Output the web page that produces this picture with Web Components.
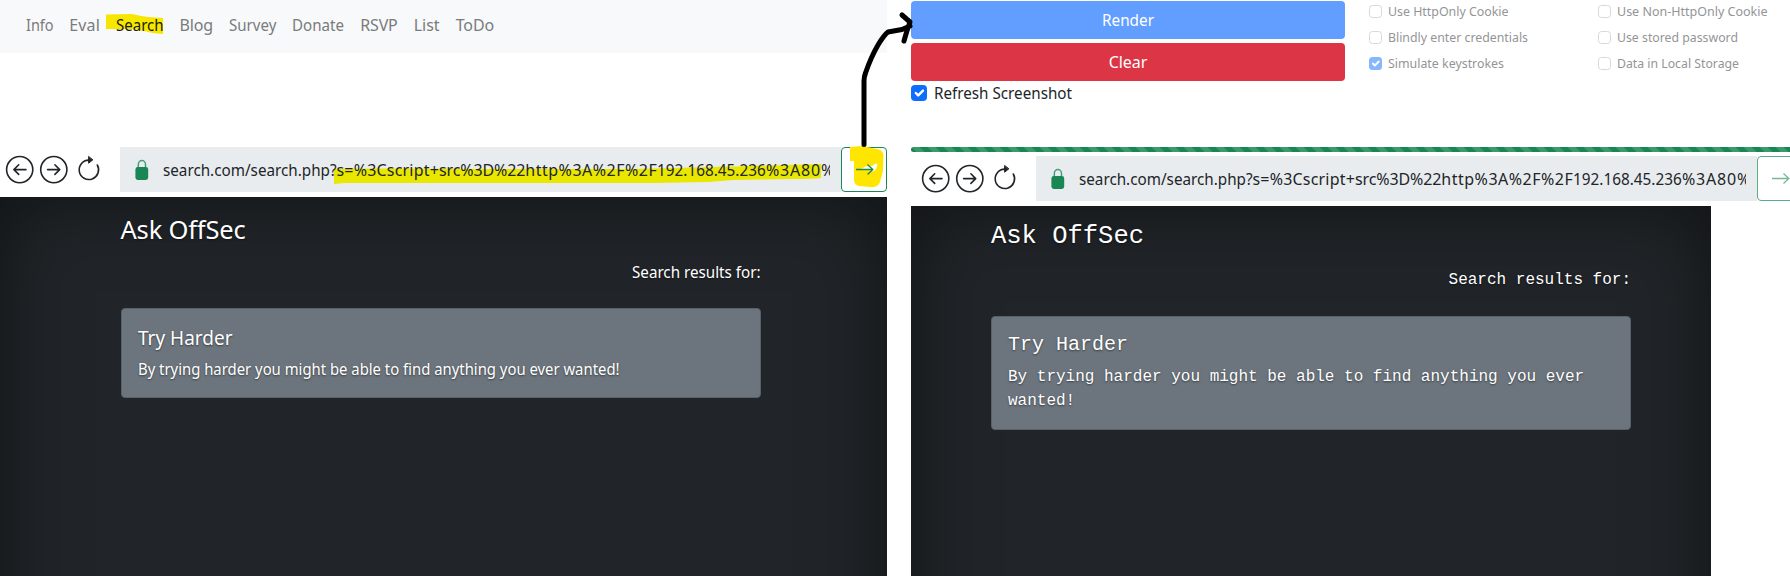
<!DOCTYPE html>
<html lang="en">
<head>
<meta charset="utf-8">
<title>Search</title>
<style>
body{margin:0;background:#fff;width:1790px;height:576px;overflow:hidden;font-family:"Noto Sans",sans-serif;font-size:16px;line-height:24px;color:#212529}
</style>
</head>
<body>
<app-page></app-page>
<script>
class Base extends HTMLElement{
  constructor(){super();this.attachShadow({mode:"open"})}
  connectedCallback(){this.shadowRoot.innerHTML=this.render()}
}
/* Text set to an exact advance width: condensed when too wide, tracked out when too narrow. */
class FitText extends Base{
  render(){return `<style>:host{display:inline-block;white-space:pre;width:${this.getAttribute("w")}px}span{display:inline-block;transform-origin:0 50%}</style><span><slot></slot></span>`}
  connectedCallback(){
    super.connectedCallback();
    const s=this.shadowRoot.querySelector("span"),w=+this.getAttribute("w");
    const n=[...this.textContent].length,cur=s.getBoundingClientRect().width;
    s.style.marginRight="-60px";
    if(w/cur<.975)s.style.transform=`scaleX(${(w/cur).toFixed(4)})`;
    else s.style.letterSpacing=((w-cur)/n).toFixed(4)+"px";
  }
}
class NavBar extends Base{
  render(){
    const items=[["Info",27.6],["Eval",30.6],["Search",47.6],["Blog",33.4],["Survey",47.4],["Donate",52],["RSVP",37.4],["List",26],["ToDo",38.6]];
    return `<style>:host{display:block;background:#f8f9fa}nav{display:flex;gap:16px;height:53px;box-sizing:border-box;padding:13px 0 0 25.700px;color:#7a7b7c}
    .on{color:#1b1c06;position:relative}.on svg{position:absolute;left:-9.500px;top:0}.on fit-text{position:relative}</style>
    <nav>${items.map(([t,w])=>`<span class="${t=="Search"?"on":""}">${t=="Search"?'<svg width="58" height="24"><path d="M0 1.5L26 1Q34 3 42 4L57 5V21Q48 21 38 18L26 16H0Z" fill="#f6e600"/></svg>':""}<fit-text w="${w}">${t}</fit-text></span>`).join("")}</nav>`}
}
class AddressBar extends Base{
  render(){
    const m=this.hasAttribute("marked");
    const parts=[["search.com/search.php?",173.5],["s=%3Cscript+",102.5],["src%3D%22",86.3],["http%3A%2F%2F",132],["192.168.45.236",108.7],["%3A80",55],["%",13.3]];
    return `<style>:host{display:flex;height:45px;align-items:stretch}
    .icons{flex:none;width:120px}
    .icons svg{display:block}
    .wrap{flex:none;background:#e9ecef;display:flex;width:721px;box-sizing:border-box;padding-left:15px}
    .wrap>svg{flex:none}
    .txt{position:relative;padding-top:11px;width:667px}
    .txt div{position:relative;overflow:hidden;width:667px;display:flex}
    .txt fit-text{flex:none}
    .txt svg{position:absolute;left:170px;top:14px}
    .btn{flex:none;box-sizing:border-box;width:46px;height:45px;border:1px solid ${m?"#198754":"#5eab87"};border-radius:4px;background:#fff;position:relative}
    .btn svg{position:absolute;left:0;top:-2px}</style>
    <div class="icons"><svg width="120" height="45" fill="none" stroke="#212529" stroke-width="1.6" stroke-linecap="round" stroke-linejoin="round">
      <circle cx="19.7" cy="22.6" r="13.1"/><path d="M26 22.6H14M18.7 17.8L13.9 22.6L18.7 27.4"/>
      <circle cx="53.8" cy="22.6" r="13.1"/><path d="M47.6 22.6H59.7M54.9 17.8L59.7 22.6L54.9 27.4"/>
      <path d="M97.3 18A9.7 9.7 0 1 1 88.7 13.1"/><path d="M88.6 9.8V16.2L92.6 13Z" fill="#212529" stroke-width="1"/>
    </svg></div>
    <div class="wrap"><svg width="28" height="45"><path d="M3.3 22V17.8a3.6 4.2 0 0 1 7.2 0V22" fill="none" stroke="#46a077" stroke-width="1.5"/><rect x="0.4" y="20" width="12.8" height="13" rx="2.4" fill="#198754"/></svg>
    <div class="txt">${m?'<svg width="488" height="24"><path d="M1 8L40 7.5L160 8L300 8L400 5.5L488 3V17Q478 18 460 18L400 19L376 21L320 22H160L45 22L12 22L1 23Z" fill="#e9e700"/></svg>':""}<div>${parts.map(([t,w])=>`<fit-text w="${w}">${t}</fit-text>`).join("")}</div></div></div>
    <div class="btn"><svg width="44" height="46">${m?'<path d="M8 1L20 0L35 3Q41 4 41.500 9L41 25L38 36Q36 42 28 41L17 40Q12 39 12 34V15H8Z" fill="#ffe600"/><path d="M19 23Q25 19 30 20L33 18Q37 16 34 23Q32 27 27 24Z" fill="#fff"/>':""}<path d="M14 23.500H30.500M25.500 18.500L30.800 23.500L25.500 28.500" fill="none" stroke="${m?"#198754":"#75b798"}" stroke-width="1.3"/></svg></div>`}
}
class ResultCard extends Base{
  render(){return `<style>:host{display:block;box-sizing:border-box;width:640px;background:#6c757d;border:1px solid #596168;border-radius:4px;padding:var(--pt,17px) 16px 16px}
  .t{font-size:20px;line-height:24px;margin-bottom:var(--gap,7px)}.b{line-height:24px}</style><div class="t"><slot name="title"></slot></div><div class="b"><slot></slot></div>`}
}
class AskScreen extends Base{
  render(){return `<style>:host{display:block;background:#212529;color:#fff;text-shadow:0 1px 2px rgba(0,0,0,.5);box-shadow:inset 0 0 80px rgba(0,0,0,.5);overflow:hidden;box-sizing:border-box;flex:none}
  .h{font-size:25.500px;line-height:29px;height:29px}.s{display:flex;justify-content:flex-end;width:640px}</style>
  <div class="h"><slot name="heading"></slot></div><div class="s"><slot name="sub"></slot></div><slot></slot>`}
}
class CheckItem extends Base{
  render(){
    const on=this.hasAttribute("on"),d=this.hasAttribute("dim"),s=d?13:16;
    return `<style>:host{display:flex;align-items:center}
    i{box-sizing:border-box;flex:none;width:${s}px;height:${s}px;border-radius:${d?3.5:4}px;${on?"":"border:1px solid #d8d8d8;"}background:${on?(d?"#86b6fe":"#0d6efd"):"#fff"};display:flex;align-items:center;justify-content:center;margin-right:${d?6:7}px}
    i svg{width:${s}px;height:${s}px;flex:none}</style>
    <i>${on?'<svg viewBox="0 0 20 20"><path d="M6 10l3 3l6-6" fill="none" stroke="#fff" stroke-width="3" stroke-linecap="round" stroke-linejoin="round"/></svg>':""}</i><slot></slot>`}
}
class ActionButton extends Base{
  render(){return `<style>:host{display:flex;justify-content:center;align-items:center;height:38px;border-radius:4px;color:#fff;background:var(--bg);box-sizing:border-box}</style><slot></slot>`}
}
class AppPage extends Base{
  render(){return `<style>
  :host{display:flex;position:relative;width:1790px;height:576px;overflow:hidden;background:#fff}
  .l{width:887px;flex:none;display:flex;flex-direction:column;margin-right:24px}
  .l address-bar{margin-top:94px;margin-bottom:5px}
  .l ask-screen{height:500px;padding:18px 0 0 120.500px}
  .r{width:879px;flex:none;display:flex;flex-direction:column;overflow:hidden}
  .top{display:flex;height:147px;flex:none}
  .acts{width:434px;flex:none;display:flex;flex-direction:column;gap:4px;padding-top:1px}
  .chk{margin-top:-4px}
  .opts{flex:none;display:grid;grid-template-columns:229px 210px;grid-auto-rows:26px;margin-left:24px;color:#939597;font-size:13px;align-content:start;margin-top:-2px}
  .bar{height:5px;flex:none;width:890px;border-radius:4px;background:linear-gradient(45deg,rgba(255,255,255,.15) 25%,transparent 25%,transparent 50%,rgba(255,255,255,.15) 50%,rgba(255,255,255,.15) 75%,transparent 75%) 0 0/16px 16px #198754;margin-bottom:4px}
  .r address-bar{width:887px;margin-left:-3px;padding-left:8px;margin-bottom:5px;flex:none}
  .r ask-screen{width:800px;height:500px;padding:16px 0 0 80px;font-family:"Liberation Mono",monospace}
  .r result-card{--pt:16px;--gap:8px}
  .arrow{position:absolute;left:850px;top:0;pointer-events:none}
  </style>
  <div class="l"><nav-bar></nav-bar><address-bar marked></address-bar>
   <ask-screen><fit-text slot="heading" w="125">Ask OffSec</fit-text><fit-text slot="sub" w="128.500" style="margin-top:16px">Search results for:</fit-text>
    <result-card style="margin-top:24px"><fit-text slot="title" w="94.500">Try Harder</fit-text><fit-text w="481.500">By trying harder you might be able to find anything you ever wanted!</fit-text></result-card></ask-screen></div>
  <div class="r"><div class="top"><div class="acts"><action-button style="--bg:#619eff"><fit-text w="52">Render</fit-text></action-button><action-button style="--bg:#dc3545"><fit-text w="38.500">Clear</fit-text></action-button><check-item class="chk" on><fit-text w="138">Refresh Screenshot</fit-text></check-item></div>
   <div class="opts"><check-item dim><fit-text w="120.500">Use HttpOnly Cookie</fit-text></check-item><check-item dim><fit-text w="150.500">Use Non-HttpOnly Cookie</fit-text></check-item><check-item dim><fit-text w="140">Blindly enter credentials</fit-text></check-item><check-item dim><fit-text w="121">Use stored password</fit-text></check-item><check-item dim on><fit-text w="116">Simulate keystrokes</fit-text></check-item><check-item dim><fit-text w="122">Data in Local Storage</fit-text></check-item></div></div>
   <div class="bar"></div><address-bar></address-bar>
   <ask-screen><span slot="heading">Ask OffSec</span><span slot="sub" style="margin-top:17px">Search results for:</span>
    <result-card style="margin-top:24px"><span slot="title">Try Harder</span>By trying harder you might be able to find anything you ever wanted!</result-card></ask-screen></div>
  <svg class="arrow" width="66" height="150" fill="none" stroke="#000" stroke-width="5" stroke-linecap="round" stroke-linejoin="round"><path d="M14 144.500V81Q14 77 15.500 73Q21 57 28 45Q34 35 38 32L52 29.500L60 26M52 15L60 22Q57 30 54 41"/></svg>`}
}
for(const [n,c] of [["fit-text",FitText],["nav-bar",NavBar],["address-bar",AddressBar],["result-card",ResultCard],["ask-screen",AskScreen],["check-item",CheckItem],["action-button",ActionButton],["app-page",AppPage]])customElements.define(n,c);
</script>
</body>
</html>
